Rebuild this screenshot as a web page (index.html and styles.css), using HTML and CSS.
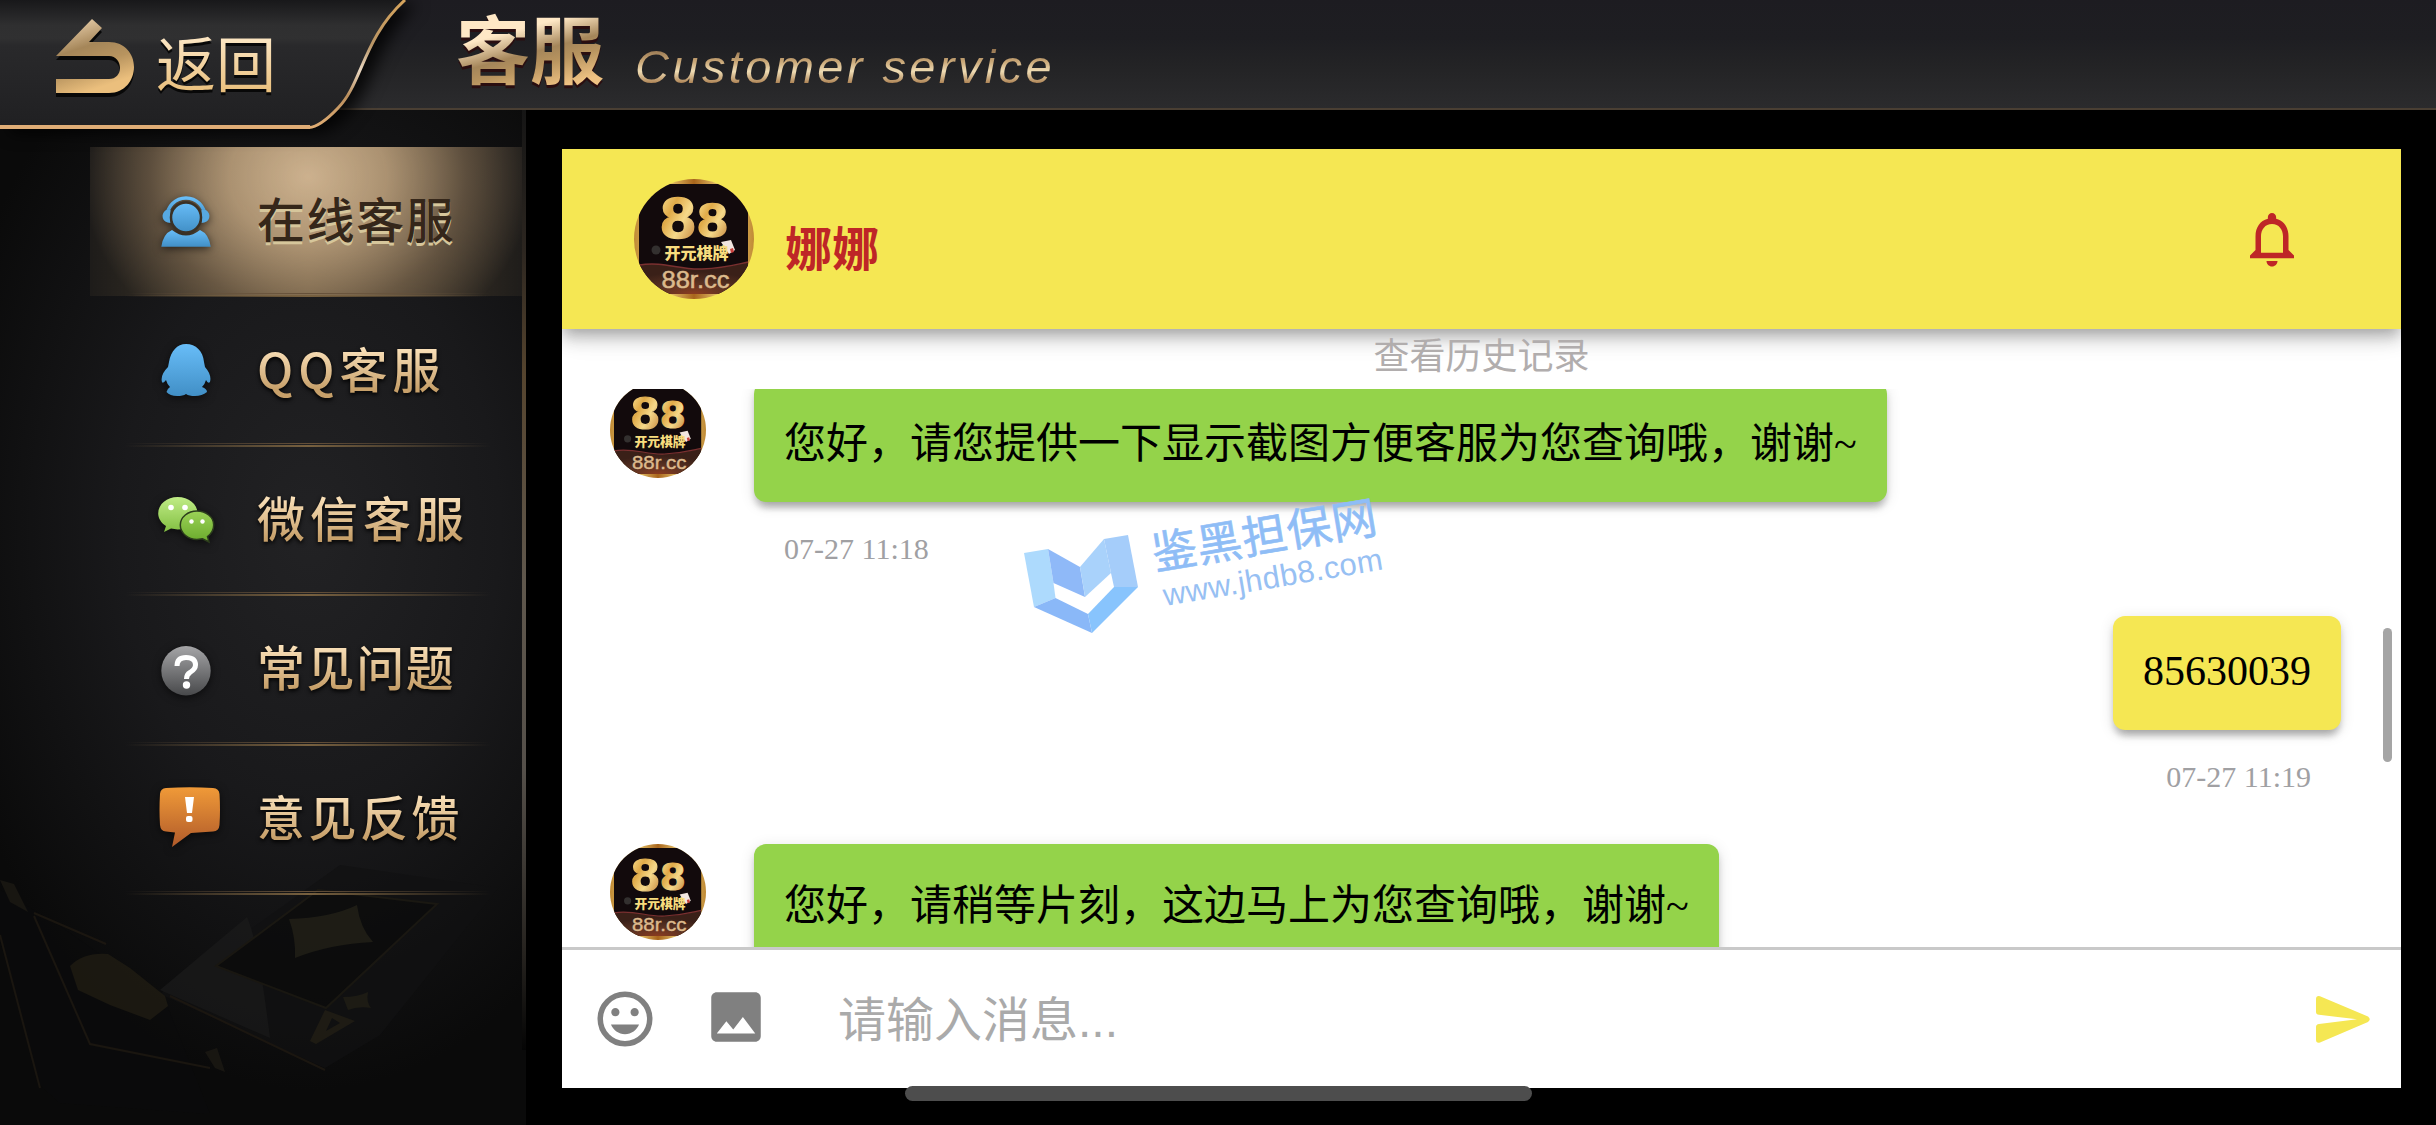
FILE: index.html
```html
<!DOCTYPE html>
<html lang="zh-CN">
<head>
    <meta charset="UTF-8">
    <meta name="viewport" content="width=device-width, initial-scale=1.0">
    <title>客服</title>
    <link rel="stylesheet" href="styles.css">
</head>
<body>
    <svg class="defs" width="0" height="0">
        <defs>
            <linearGradient id="gold" x1="0" y1="0" x2="1" y2="1">
                <stop offset="0" stop-color="#fff0a8"/>
                <stop offset="0.35" stop-color="#e0aa48"/>
                <stop offset="0.6" stop-color="#f6d98a"/>
                <stop offset="1" stop-color="#b9722c"/>
            </linearGradient>
            <linearGradient id="frame" x1="0" y1="0" x2="1" y2="0">
                <stop offset="0" stop-color="#c08a35"/>
                <stop offset="0.25" stop-color="#f3d77c"/>
                <stop offset="0.5" stop-color="#a8651c"/>
                <stop offset="0.75" stop-color="#f3d77c"/>
                <stop offset="1" stop-color="#c08a35"/>
            </linearGradient>
            <radialGradient id="ground" cx="0.5" cy="1" r="0.7">
                <stop offset="0" stop-color="#8a3c20"/>
                <stop offset="0.5" stop-color="#5a3222"/>
                <stop offset="1" stop-color="#3a2018"/>
            </radialGradient>
            <linearGradient id="arrow" x1="0" y1="0" x2="0.35" y2="1">
                <stop offset="0" stop-color="#f8dfbd"/>
                <stop offset="0.45" stop-color="#a58659"/>
                <stop offset="0.7" stop-color="#b8945f"/>
                <stop offset="1" stop-color="#ebbf7d"/>
            </linearGradient>
            <linearGradient id="tab" x1="0" y1="0" x2="0" y2="1">
                <stop offset="0" stop-color="#18181a"/>
                <stop offset="0.2" stop-color="#2f2f30"/>
                <stop offset="0.3" stop-color="#303031"/>
                <stop offset="0.36" stop-color="#29292b"/>
                <stop offset="1" stop-color="#202022"/>
            </linearGradient>
            <linearGradient id="edge" x1="0" y1="0" x2="0" y2="1">
                <stop offset="0" stop-color="#d6a45c"/>
                <stop offset="0.35" stop-color="#b99565"/>
                <stop offset="0.55" stop-color="#e8d6c0"/>
                <stop offset="0.75" stop-color="#b98e5c"/>
                <stop offset="1" stop-color="#e2ae74"/>
            </linearGradient>
            <linearGradient id="blue" x1="0" y1="0" x2="0" y2="1">
                <stop offset="0" stop-color="#68bdf8"/>
                <stop offset="1" stop-color="#418fc6"/>
            </linearGradient>
            <linearGradient id="greenLight" x1="0" y1="0" x2="0" y2="1">
                <stop offset="0" stop-color="#c0ec86"/>
                <stop offset="1" stop-color="#82bf42"/>
            </linearGradient>
            <linearGradient id="greenDark" x1="0" y1="0" x2="0" y2="1">
                <stop offset="0" stop-color="#9bd257"/>
                <stop offset="1" stop-color="#6aaa2c"/>
            </linearGradient>
            <linearGradient id="grey" x1="0" y1="0" x2="0" y2="1">
                <stop offset="0" stop-color="#a5a5a7"/>
                <stop offset="1" stop-color="#48494b"/>
            </linearGradient>
            <linearGradient id="orange" x1="0" y1="0" x2="0" y2="1">
                <stop offset="0" stop-color="#f09a38"/>
                <stop offset="1" stop-color="#b05a2a"/>
            </linearGradient>
            <clipPath id="circle"><circle cx="60" cy="60" r="60"/></clipPath>
            <symbol id="avatar" viewBox="0 0 120 120">
                <g clip-path="url(#circle)">
                    <rect width="120" height="120" fill="url(#frame)"/>
                    <rect x="5" y="5" width="109" height="110" fill="#120a0c"/>
                    <path d="M5 86C30 82 45 91 68 90S100 86 114 83V115H5Z" fill="url(#ground)"/>
                    <path d="M5 86C30 82 45 91 68 90S100 86 114 83" fill="none" stroke="#7a3030" stroke-width="1.5"/>
                    <text class="logo-num" x="26.500" y="58.500" font-size="58" textLength="35" lengthAdjust="spacingAndGlyphs">8</text>
                    <text class="logo-num" x="63.500" y="58" font-size="49" textLength="30" lengthAdjust="spacingAndGlyphs">8</text>
                    <circle cx="22" cy="71" r="4.5" fill="#33302f"/>
                    <path d="M87 63L97 61 101 71 95 75Z" fill="#f1e6e0"/>
                    <path d="M96 70l3-1 1 4-3 1z" fill="#c8403c"/>
                    <text class="logo-cn" x="30.5" y="80" font-size="16" textLength="64">开元棋牌</text>
                    <text class="logo-url" x="27.5" y="109" font-size="23" textLength="68" lengthAdjust="spacingAndGlyphs">88r.cc</text>
                </g>
            </symbol>
        </defs>
    </svg>

    <header class="topbar">
        <a class="back" href="#">
            <svg class="back-bg" width="430" height="140" viewBox="0 0 430 140">
                <path d="M0 0H404C363 38 364 84 338 110Q322 127 309 127H0Z" fill="url(#tab)"/>
                <path d="M405 0C363 38 362 84 338 108Q320 127 309 127.500" fill="none" stroke="url(#edge)" stroke-width="3"/>
                <path d="M0 127H310" stroke="#e0ad76" stroke-width="4"/>
            </svg>
            <svg class="back-arrow" width="80" height="78" viewBox="0 0 80 78">
                <path d="M0 37L36 0 46 9 33 23H53C69 23 78 35 78 48S69 74 53 74H0V60H53C60 60 64 55 64 49S60 37 53 37Z" fill="url(#arrow)"/>
            </svg>
            <span class="back-text">返回</span>
        </a>
        <h1 class="title">客服</h1>
        <span class="subtitle">Customer service</span>
    </header>

    <main class="main">
        <nav class="sidebar">
            <svg class="cards" width="526" height="280" viewBox="0 0 526 280">
                <path d="M340 5L498 28 380 175 325 208 160 134Z" fill="#111112"/>
                <path d="M160 130L247 57Q258 80 270 178Z" fill="#1a1a1a"/>
                <path d="M318 30L437 44 326 148 216 106Z" fill="#0b0b0b" stroke="#1d1a12" stroke-width="2"/>
                <path d="M289 59Q330 58 357 45Q360 68 373 82Q330 84 295 98Q296 78 289 59Z" fill="#222016"/>
                <path d="M343 137Q358 137 368 132Q366 142 371 148Q358 146 348 150Z" fill="#222016"/>
                <path d="M325 150L355 161 316 184 310 181ZM332 158l-6 13 14-8z" fill="#242016" fill-rule="evenodd"/>
                <path d="M0 80L40 225 60 243 210 254 165 140 60 66 0 30Z" fill="#0b0b0c"/>
                <path d="M0 75L40 228M34 56L90 184 210 208M34 53L106 84M170 136L325 210" fill="none" stroke="#201a12" stroke-width="2"/>
                <path d="M70 106Q84 92 108 94L130 108 165 136 168 146 150 160 110 145 78 130Z" fill="#211d13"/>
                <path d="M0 20l14 4 14 28-18-10zM205 192l12-4 8 24-10-4z" fill="#1d1a14"/>
            </svg>
            <ul class="menu">
                <li class="menu-item active">
                    <svg width="70" height="70" viewBox="0 0 70 70">
                        <path d="M15 30A19 19 0 0 1 53 30" fill="none" stroke="url(#blue)" stroke-width="3.500"/>
                        <path d="M18.500 23V36C10 36 8 27 14 23ZM49.500 23V36C58 36 60 27 54 23Z" fill="#57a9e2"/>
                        <path d="M9.300 59.700Q11 47 20 43Q34 54 48 43Q57 47 58.700 59.700Z" fill="url(#blue)"/>
                        <circle cx="34" cy="30.500" r="15" fill="url(#blue)" stroke="#3a3126" stroke-width="2.500"/>
                    </svg>
                    <span>在线客服</span>
                </li>
                <li class="menu-item qq">
                    <svg width="70" height="70" viewBox="0 0 70 70">
                        <path d="M34 8C44 8 51 15 52 26L53 31Q60 39 58 46Q56 48 54 44Q53 48 50 51Q55 53 55 56Q50 60 43 60 37 60 34 58 31 60 25 60 18 60 14.500 56 15 53 18 51 15 48 14 44 11 48 10 46 8 39 16 31L17 26C19 15 25 8 34 8Z" fill="url(#blue)"/>
                    </svg>
                    <span>QQ客服</span>
                </li>
                <li class="menu-item wechat">
                    <svg width="70" height="70" viewBox="0 0 70 70">
                        <path d="M25.700 12C36.500 12 45.500 19 45.500 28S36.500 44.500 25.700 44.500L19 43.500 12 47 14 41C9 38 6.200 33 6.200 28.500 6.200 19 15 12 25.700 12Z" fill="url(#greenLight)"/>
                        <path d="M45 26C54 26 61.700 32 61.700 40 61.700 45 59 49 55.500 51.500L57 57 50.500 53.800 45 54.500C36 54.500 28.300 48 28.300 40S36 26 45 26Z" fill="url(#greenDark)" stroke="#2c3d1c" stroke-width="1.500"/>
                        <g fill="#fff"><circle cx="19" cy="22.500" r="2.800"/><circle cx="33" cy="22.500" r="2.800"/><circle cx="39.500" cy="36.500" r="2.200"/><circle cx="50.500" cy="36.500" r="2.200"/></g>
                    </svg>
                    <span>微信客服</span>
                </li>
                <li class="menu-item">
                    <svg width="70" height="70" viewBox="0 0 70 70">
                        <circle cx="34" cy="35.700" r="24.700" fill="url(#grey)"/>
                        <path d="M25 31Q25 22.500 34 22.500 43.500 22.500 43.500 30 43.500 34 38 37.500 34.500 39.500 34.500 44" fill="none" stroke="#fff" stroke-width="5"/>
                        <circle cx="34.500" cy="50" r="3.700" fill="#fff"/>
                    </svg>
                    <span>常见问题</span>
                </li>
                <li class="menu-item feedback">
                    <svg width="70" height="70" viewBox="0 0 70 70">
                        <path d="M14 4Q38 2.500 61 4Q67 4.500 67.500 10Q68.500 26 67.500 41Q67 47 61 47.500L39 49 20 63 23 48.500 14 47.500Q8.500 47 8 41Q7 26 8 10Q8.500 4.500 14 4Z" fill="url(#orange)"/>
                        <path d="M33 13H42L40 29H35Z" fill="#fff"/>
                        <rect x="34" y="32" width="6.500" height="6" rx="2" fill="#fff"/>
                    </svg>
                    <span>意见反馈</span>
                </li>
            </ul>
        </nav>

        <section class="chat">
            <div class="chat-header">
                <svg class="chat-avatar" width="120" height="120"><use href="#avatar"/></svg>
                <h2 class="chat-name">娜娜</h2>
                <svg class="bell" width="66" height="66" viewBox="0 0 24 24">
                    <path d="M12 22c1.100 0 2-.9 2-2h-4c0 1.100.9 2 2 2zm6-6v-5c0-3.070-1.630-5.640-4.500-6.320V4c0-.83-.67-1.500-1.500-1.500s-1.500.67-1.500 1.500v.68C7.640 5.360 6 7.920 6 11v5l-2 2v1h16v-1l-2-2zm-2 1H8v-6c0-2.480 1.510-4.500 4-4.500s4 2.020 4 4.500v6z" fill="#be2627"/>
                </svg>
            </div>
            <div class="history">查看历史记录</div>
            <div class="messages">
                <div class="message">
                    <svg class="avatar" width="96" height="96"><use href="#avatar"/></svg>
                    <div class="body">
                        <p class="bubble">您好，请您提供一下显示截图方便客服为您查询哦，谢谢~</p>
                        <time>07-27 11:18</time>
                    </div>
                </div>
                <div class="message mine">
                    <div class="body">
                        <p class="bubble">85630039</p>
                        <time>07-27 11:19</time>
                    </div>
                </div>
                <div class="message">
                    <svg class="avatar" width="96" height="96"><use href="#avatar"/></svg>
                    <div class="body">
                        <p class="bubble">您好，请稍等片刻，这边马上为您查询哦，谢谢~</p>
                    </div>
                </div>
                <i class="scrollbar"></i>
            </div>
            <div class="composer">
                <svg class="emoji" width="66" height="66" viewBox="0 0 24 24">
                    <circle cx="12" cy="12" r="9" fill="none" stroke="#808080" stroke-width="2"/>
                    <path d="M15.500 11c.83 0 1.500-.67 1.500-1.500S16.330 8 15.500 8 14 8.670 14 9.500s.67 1.500 1.500 1.500zm-7 0c.83 0 1.500-.67 1.500-1.500S9.330 8 8.500 8 7 8.670 7 9.500 7.670 11 8.500 11zm3.500 6.500c2.330 0 4.310-1.460 5.110-3.500H6.890c.8 2.040 2.780 3.500 5.110 3.500z" fill="#808080"/>
                </svg>
                <svg class="image" width="66" height="66" viewBox="0 0 24 24">
                    <path d="M21 19V5c0-1.100-.9-2-2-2H5c-1.100 0-2 .9-2 2v14c0 1.100.9 2 2 2h14c1.100 0 2-.9 2-2zM8.500 13.500l2.500 3.010L14.500 12l4.500 6H5l3.500-4.500z" fill="#808080"/>
                </svg>
                <span class="placeholder">请输入消息...</span>
                <svg class="send" width="54" height="47" viewBox="0 0 54 47">
                    <path d="M4 .2L52 20.500Q55.500 23.300 52 26L4 46.500Q0 47.500 0 43.500V31Q0 28.300 3 28L41 23.300 3 18.800Q0 18.500 0 16V3Q0-.5 4 .2Z" fill="#f5e753"/>
                </svg>
            </div>
        </section>
    </main>

    <svg class="watermark" width="380" height="160" viewBox="0 0 380 160">
        <path d="M4 63L28 59 33.500 93 35.500 108 14 117Z" fill="#addafd"/>
        <path d="M28 59L60 77 65 107 33.500 93Z" fill="#8fb9f8"/>
        <path d="M60 77L84 49 91 83 65 107Z" fill="#a9d2fb"/>
        <path d="M84 49L108 45 118 97 94 97 91 83Z" fill="#a5cdfa"/>
        <path d="M14 117L35.500 108 68 124 72 143Z" fill="#8ab8f8"/>
        <path d="M72 143L68 124 94 97 118 97Z" fill="#88c4fd"/>
        <text class="wm-name" transform="translate(135 80) rotate(-9.500)" font-size="45" textLength="227">鉴黑担保网</text>
        <text class="wm-url" transform="translate(145 116) rotate(-9.500)" font-size="31" textLength="222" lengthAdjust="spacing">www.jhdb8.com</text>
    </svg>
    <i class="home-bar"></i>
</body>
</html>
```
FILE: styles.css
```css
* {
    box-sizing: border-box;
}
body {
    margin: 0;
    width: 2436px;
    height: 1125px;
    overflow: hidden;
    background-color: #000;
    font-family: "Liberation Sans", "Noto Sans CJK SC", sans-serif;
}
h1, h2, p, ul {
    margin: 0;
    padding: 0;
}
svg {
    display: block;
    flex-shrink: 0;
}
.defs {
    position: absolute;
}

/* top bar */
.topbar {
    position: relative;
    z-index: 2;
    display: flex;
    height: 110px;
    background: linear-gradient(#1d1c21 0%, #1e1e22 35%, #232325 60%, #2b2b2d 100%);
    border-bottom: 2px solid #4a3f33;
}
.back {
    display: flex;
    width: 456px;
    padding-left: 56px;
    text-decoration: none;
}
.back-bg {
    position: absolute;
    left: 0;
    top: 0;
    filter: drop-shadow(10px 4px 8px rgba(0, 0, 0, 0.8));
}
.back-arrow {
    position: relative;
    margin-top: 19px;
    filter: drop-shadow(0 4px 0 #080808);
}
.back-text {
    position: relative;
    margin-left: 20px;
    margin-top: 23px;
    font-size: 60px;
    line-height: 88px;
    height: 88px;
    background: linear-gradient(#fbe4c0 20%, #e8bd79 82%);
    -webkit-background-clip: text;
    background-clip: text;
    color: transparent;
    filter: drop-shadow(0 3px 0 #080808);
}
.title {
    margin-top: -1px;
    height: 108px;
    line-height: 108px;
    font-size: 74px;
    font-weight: 700;
    background: linear-gradient(165deg, #ffe8c6 32%, #a5865a 50%, #b8945f 60%, #efc283 78%);
    -webkit-background-clip: text;
    background-clip: text;
    color: transparent;
    filter: drop-shadow(0 3px 0 #2a0e10);
}
.subtitle {
    margin-left: 31px;
    margin-top: 40px;
    height: 54px;
    line-height: 54px;
    font-size: 47px;
    font-style: italic;
    letter-spacing: 3.400px;
    white-space: nowrap;
    background: linear-gradient(#8f6f4c 15%, #c9a777 40%, #efdcb4 58%, #a87b4c 82%);
    -webkit-background-clip: text;
    background-clip: text;
    color: transparent;
}

.main {
    display: flex;
    height: 1015px;
}

/* left menu */
.sidebar {
    position: relative;
    width: 526px;
    padding: 37px 0 0 90px;
    background: radial-gradient(ellipse 380px 560px at 310px 420px, #222224 0%, #19191b 50%, #0a0a0a 100%);
}
.sidebar::after {
    content: "";
    position: absolute;
    right: 0;
    top: 0;
    width: 4px;
    height: 940px;
    background: linear-gradient(#151515 0%, #2c2620 15%, #55442e 28%, #5f574c 50%, #55504a 70%, #25221e 90%, #050505 100%);
}
.cards {
    position: absolute;
    left: 0;
    bottom: -15px;
    opacity: 0.75;
}
.menu {
    position: relative;
    list-style: none;
}
.menu-item {
    position: relative;
    display: flex;
    align-items: center;
    height: 149.400px;
    padding-left: 62px;
    font-family: "Noto Sans CJK SC", sans-serif;
    font-size: 48px;
    font-weight: 500;
    letter-spacing: 1.600px;
}
.menu-item::after {
    content: "";
    position: absolute;
    left: 35px;
    right: 35px;
    bottom: -1px;
    height: 4px;
    background: linear-gradient(90deg, transparent, #655039 50%, transparent) top / 100% 1px no-repeat,
        linear-gradient(90deg, transparent, #77603f 50%, transparent) bottom / 100% 2px no-repeat;
}
.menu-item svg {
    filter: drop-shadow(0 2px 4px rgba(0, 0, 0, 0.6));
}
.menu-item span {
    margin-left: 35px;
    margin-top: -9px;
    line-height: 70px;
    white-space: nowrap;
    background: linear-gradient(#fbe2bb 22%, #c7a06a 82%);
    -webkit-background-clip: text;
    background-clip: text;
    color: transparent;
    filter: drop-shadow(0 2px 2px #000);
}
.menu-item.active {
    background: radial-gradient(ellipse 225px 190px at 50% 20%, rgba(204, 177, 142, 1) 0%, rgba(177, 151, 118, 0.92) 35%, rgba(110, 92, 72, 0.7) 70%, rgba(40, 36, 32, 0.5) 100%),
        linear-gradient(90deg, #141414, #8c744d 50%, #141414);
}
.menu-item.active span {
    background: none;
    color: #35271a;
    filter: none;
    text-shadow: 0 3px 0 #d6c69b;
}
.menu-item.qq {
    letter-spacing: 5px;
}
.menu-item.wechat {
    letter-spacing: 5px;
}
.menu-item.feedback {
    letter-spacing: 3.500px;
}

/* chat panel */
.chat {
    display: flex;
    flex-direction: column;
    width: 1839px;
    height: 939px;
    margin: 39px 0 0 36px;
    background-color: #fff;
    overflow: hidden;
}
.chat-header {
    display: flex;
    align-items: center;
    flex-shrink: 0;
    height: 180px;
    padding: 0 96px 0 72px;
    background-color: #f5e753;
    box-shadow: 0 6px 12px -3px rgba(0, 0, 0, 0.2), 0 12px 15px rgba(0, 0, 0, 0.14), 0 3px 30px rgba(0, 0, 0, 0.12);
}
.chat-name {
    margin-left: 31px;
    margin-top: 22px;
    color: #be2627;
    font-size: 47px;
    line-height: 60px;
}
.bell {
    margin-left: auto;
}
.history {
    position: relative;
    flex-shrink: 0;
    height: 60px;
    line-height: 55px;
    text-align: center;
    font-size: 36px;
    color: #b1adad;
}
.messages {
    position: relative;
    flex: 1;
    overflow: hidden;
    padding: 0 60px 0 48px;
    font-family: "Liberation Serif", "Noto Sans CJK SC", serif;
}
.message {
    display: flex;
    height: 234px;
}
.message:first-child {
    margin-top: -7px;
}
.message .body {
    margin-left: 48px;
}
.message.mine {
    justify-content: flex-end;
    height: 228px;
}
.bubble {
    height: 120px;
    padding: 0 30px;
    line-height: 124px;
    font-size: 42px;
    color: #000;
    white-space: nowrap;
    background-color: #94d34a;
    border-radius: 12px;
    box-shadow: 0 9px 9px -6px rgba(0, 0, 0, 0.2), 0 6px 6px rgba(0, 0, 0, 0.14), 0 3px 15px rgba(0, 0, 0, 0.12);
}
.mine .bubble {
    height: 114px;
    line-height: 111px;
    background-color: #f5e753;
}
.message time {
    display: block;
    margin-top: 29px;
    padding: 0 30px;
    line-height: 36px;
    font-size: 30px;
    color: #a0a0a3;
}
.mine time {
    text-align: right;
}
.scrollbar {
    position: absolute;
    right: 9px;
    top: 239px;
    width: 9px;
    height: 134px;
    border-radius: 5px;
    background-color: #a5a5a5;
}
.composer {
    display: flex;
    align-items: center;
    flex-shrink: 0;
    height: 141px;
    padding: 0 31px 0 30px;
    border-top: 3px solid #c9c9c9;
}
.image {
    margin-left: 45px;
    margin-top: -5px;
}
.placeholder {
    margin-left: 69px;
    margin-top: -6px;
    font-size: 48px;
    color: #aaa;
}
.send {
    margin-left: auto;
}

/* overlays */
.watermark {
    position: absolute;
    z-index: 3;
    left: 1020px;
    top: 490px;
}
.wm-name {
    font-weight: 400;
    fill: #8fbdf6;
    stroke: #8fbdf6;
    stroke-width: 0.6px;
}
.wm-url {
    fill: #97c0f3;
}
.home-bar {
    position: absolute;
    z-index: 3;
    left: 905px;
    top: 1086px;
    width: 627px;
    height: 15px;
    border-radius: 8px;
    background-color: #4d4d4d;
}

/* avatar lettering */
.logo-num,
.logo-cn,
.logo-url {
    font-family: "Liberation Sans", "Noto Sans CJK SC", sans-serif;
}
.logo-num {
    font-weight: 700;
    fill: url(#gold);
    stroke: url(#gold);
    stroke-width: 1.500px;
}
.logo-cn {
    font-weight: 900;
    fill: #f7dc7e;
}
.logo-url {
    fill: #dcb98c;
    stroke: #dcb98c;
    stroke-width: 0.5px;
}
```
